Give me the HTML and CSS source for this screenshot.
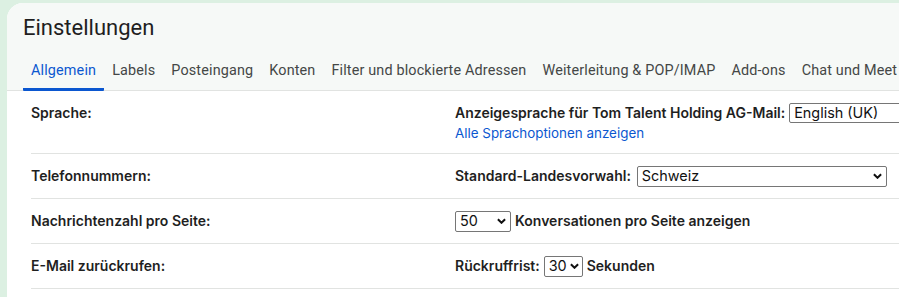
FILE: index.html
```html
<!DOCTYPE html>
<html lang="de">
<head>
	<meta charset="UTF-8">
	<title>Einstellungen</title>
	<link rel="stylesheet" href="styles.css">
</head>
<body>
	<div class="card">
		<header class="head">
			<h1>Einstellungen</h1>
			<nav class="tabs">
				<a class="tab active">Allgemein</a>
				<a class="tab">Labels</a>
				<a class="tab">Posteingang</a>
				<a class="tab">Konten</a>
				<a class="tab">Filter und blockierte Adressen</a>
				<a class="tab">Weiterleitung &amp; POP/IMAP</a>
				<a class="tab">Add-ons</a>
				<a class="tab">Chat und Meet</a>
			</nav>
		</header>
		<section class="settings">
			<div class="row">
				<div class="label">Sprache:</div>
				<div class="value">
					<div class="line">
						<span>Anzeigesprache für Tom Talent Holding AG-Mail:</span>
						<span class="select wide"><span>English (UK)</span></span>
					</div>
					<a class="link">Alle Sprachoptionen anzeigen</a>
				</div>
			</div>
			<div class="row">
				<div class="label">Telefonnummern:</div>
				<div class="value">
					<div class="line">
						<span>Standard-Landesvorwahl:</span>
						<span class="select country"><span>Schweiz</span>
							<svg class="chev" viewBox="0 0 10 6"><path d="M1 1l4 4 4-4"/></svg>
						</span>
					</div>
				</div>
			</div>
			<div class="row">
				<div class="label">Nachrichtenzahl pro Seite:</div>
				<div class="value">
					<div class="line">
						<span class="select count"><span>50</span>
							<svg class="chev" viewBox="0 0 10 6"><path d="M1 1l4 4 4-4"/></svg>
						</span>
						<span>Konversationen pro Seite anzeigen</span>
					</div>
				</div>
			</div>
			<div class="row">
				<div class="label">E-Mail zurückrufen:</div>
				<div class="value">
					<div class="line">
						<span>Rückruffrist:</span>
						<span class="select small"><span>30</span>
							<svg class="chev" viewBox="0 0 10 6"><path d="M1 1l4 4 4-4"/></svg>
						</span>
						<span>Sekunden</span>
					</div>
				</div>
			</div>
		</section>
	</div>
</body>
</html>
```
FILE: styles.css
```css
body{
	margin: 0;
	padding: 3px 0 0 7px;
	background-color: #dcf0e2;
	font-family: Inter, "Liberation Sans", sans-serif;
	color: #1f1f1f;
	overflow: hidden;
}
.card{
	background-color: #fff;
	border-top-left-radius: 16px;
	height: 400px;
	overflow: hidden;
}
.head{
	background-color: #f6f9f7;
	padding-top: 11px;
}
h1{
	margin: 0 0 0 16px;
	font-family: Roboto, "Open Sans", sans-serif;
	font-weight: 400;
	font-size: 22px;
	line-height: 28px;
}
.tabs{
	display: flex;
	white-space: nowrap;
	padding: 19px 0 0 16px;
	border-bottom: 1px solid #e1e3e1;
}
.tab{
	font-family: Roboto, "Open Sans", sans-serif;
	font-size: 14.4px;
	letter-spacing: 0.15px;
	line-height: 20px;
	color: #444746;
	padding: 0 8px 7px;
	border-bottom: 3px solid transparent;
	margin-bottom: -1px;
}
.tab.active{
	color: #0b57d0;
	border-bottom-color: #0b57d0;
	border-radius: 1px;
}
.settings{
	padding-left: 24px;
	font-size: 14px;
	font-weight: 600;
}
.row{
	display: grid;
	grid-template-columns: 424px 1fr;
	padding: 12px 0;
	border-bottom: 1px solid #e1e3e1;
	line-height: 20px;
	white-space: nowrap;
}
.row:first-child{
	padding-bottom: 10px;
}
.line{
	display: flex;
	align-items: center;
	gap: 4px;
	height: 20px;
}
.link{
	display: block;
	color: #0b57d0;
	font-weight: 400;
	font-size: 13.4px;
}
.select{
	display: inline-flex;
	align-items: center;
	justify-content: space-between;
	box-sizing: border-box;
	height: 21px;
	padding: 0 4px 0 4px;
	border: 1px solid #767676;
	border-radius: 2px;
	background-color: #fff;
	font-weight: 400;
	font-size: 14.4px;
	color: #111;
}
.wide{
	width: 140px;
	height: 20px;
	border-radius: 2px 0 0 2px;
}
.country{
	width: 250px;
	margin-left: 2px;
}
.count{
	width: 56px;
}
.small{
	width: 39px;
	padding-right: 3px;
}
.chev{
	width: 9px;
	height: 6px;
	fill: none;
	stroke: #111;
	stroke-width: 2.2;
}
```
